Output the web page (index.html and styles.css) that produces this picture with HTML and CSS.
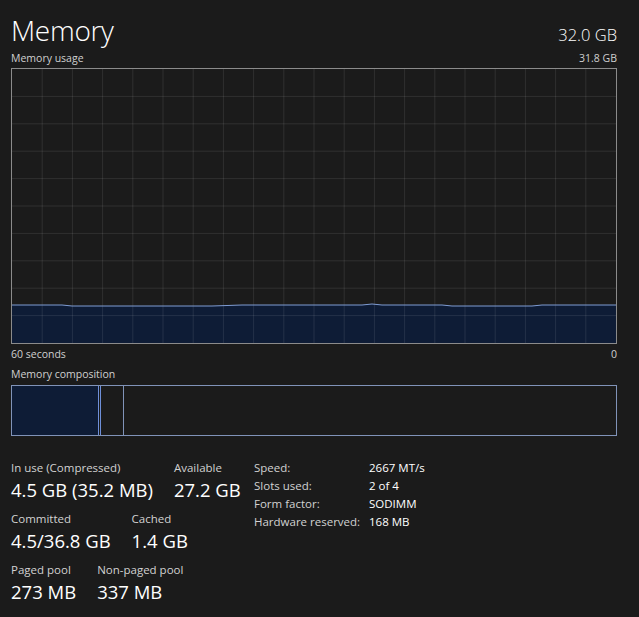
FILE: index.html
```html
<!DOCTYPE html>
<html>
<head>
<meta charset="utf-8">
<link rel="stylesheet" href="styles.css">
</head>
<body>
<div class="page">
  <div class="header">
    <div class="title">Memory</div>
    <div class="total">32.0 GB</div>
  </div>
  <div class="caption-row usage-label">
    <span>Memory usage</span>
    <span>31.8 GB</span>
  </div>
  <div class="graph">
    <svg width="604" height="274" viewBox="0 0 604 274" preserveAspectRatio="none">
      <path class="fill" d="M0 236 L50 236 L60 237 L200 237 L230 236 L350 236 L360 235 L370 236 L430 236 L440 237 L520 237 L530 236 L604 236 L604 274 L0 274 Z"/>
      <g class="grid">
        <line x1="30.2" y1="0" x2="30.2" y2="274"/>
        <line x1="60.4" y1="0" x2="60.4" y2="274"/>
        <line x1="90.6" y1="0" x2="90.6" y2="274"/>
        <line x1="120.8" y1="0" x2="120.8" y2="274"/>
        <line x1="151" y1="0" x2="151" y2="274"/>
        <line x1="181.2" y1="0" x2="181.2" y2="274"/>
        <line x1="211.4" y1="0" x2="211.4" y2="274"/>
        <line x1="241.6" y1="0" x2="241.6" y2="274"/>
        <line x1="271.8" y1="0" x2="271.8" y2="274"/>
        <line x1="302" y1="0" x2="302" y2="274"/>
        <line x1="332.2" y1="0" x2="332.2" y2="274"/>
        <line x1="362.4" y1="0" x2="362.4" y2="274"/>
        <line x1="392.6" y1="0" x2="392.6" y2="274"/>
        <line x1="422.8" y1="0" x2="422.8" y2="274"/>
        <line x1="453" y1="0" x2="453" y2="274"/>
        <line x1="483.2" y1="0" x2="483.2" y2="274"/>
        <line x1="513.4" y1="0" x2="513.4" y2="274"/>
        <line x1="543.6" y1="0" x2="543.6" y2="274"/>
        <line x1="573.8" y1="0" x2="573.8" y2="274"/>
        <line x1="0" y1="27.4" x2="604" y2="27.4"/>
        <line x1="0" y1="54.8" x2="604" y2="54.8"/>
        <line x1="0" y1="82.2" x2="604" y2="82.2"/>
        <line x1="0" y1="109.6" x2="604" y2="109.6"/>
        <line x1="0" y1="137" x2="604" y2="137"/>
        <line x1="0" y1="164.4" x2="604" y2="164.4"/>
        <line x1="0" y1="191.8" x2="604" y2="191.8"/>
        <line x1="0" y1="219.2" x2="604" y2="219.2"/>
        <line x1="0" y1="246.6" x2="604" y2="246.6"/>
      </g>
      <path class="line" d="M0 236 L50 236 L60 237 L200 237 L230 236 L350 236 L360 235 L370 236 L430 236 L440 237 L520 237 L530 236 L604 236"/>
    </svg>
  </div>
  <div class="caption-row axis">
    <span>60 seconds</span>
    <span>0</span>
  </div>
  <div class="caption-row comp-label">
    <span>Memory composition</span>
  </div>
  <div class="composition">
    <div class="seg seg-used"></div>
    <div class="seg seg-mod"></div>
    <div class="seg seg-rest"></div>
  </div>
  <div class="details">
    <div class="stats">
      <div class="stat-row">
        <div class="stat">
          <div class="label">In use (Compressed)</div>
          <div class="value">4.5 GB (35.2 MB)</div>
        </div>
        <div class="stat">
          <div class="label">Available</div>
          <div class="value">27.2 GB</div>
        </div>
      </div>
      <div class="stat-row">
        <div class="stat">
          <div class="label">Committed</div>
          <div class="value">4.5/36.8 GB</div>
        </div>
        <div class="stat">
          <div class="label">Cached</div>
          <div class="value">1.4 GB</div>
        </div>
      </div>
      <div class="stat-row">
        <div class="stat">
          <div class="label">Paged pool</div>
          <div class="value">273 MB</div>
        </div>
        <div class="stat">
          <div class="label">Non-paged pool</div>
          <div class="value">337 MB</div>
        </div>
      </div>
    </div>
    <div class="props">
      <div class="prop-key">Speed:</div><div class="prop-val">2667 MT/s</div>
      <div class="prop-key">Slots used:</div><div class="prop-val">2 of 4</div>
      <div class="prop-key">Form factor:</div><div class="prop-val">SODIMM</div>
      <div class="prop-key">Hardware reserved:</div><div class="prop-val">168 MB</div>
    </div>
  </div>
</div>
</body>
</html>
```

FILE: styles.css
```css
html, body {
  margin: 0;
  padding: 0;
  background: #1b1b1b;
}
body {
  font-family: "Open Sans", "Noto Sans", "Liberation Sans", sans-serif;
  color: #ffffff;
  width: 639px;
  height: 617px;
  overflow: hidden;
}
.page {
  width: 606px;
  padding: 10px 0 0 11px;
}
.header {
  display: flex;
  justify-content: space-between;
  align-items: baseline;
  height: 40px;
}
.title {
  font-size: 28px;
  font-weight: 300;
  line-height: 40px;
  letter-spacing: -0.3px;
}
.total {
  font-size: 16.5px;
  font-weight: 300;
  color: #ffffff;
}
.caption-row {
  display: flex;
  justify-content: space-between;
  font-size: 10.5px;
  color: #d0d0d0;
  line-height: 16px;
  height: 17px;
}
.usage-label {
  height: 18px;
}
.graph {
  width: 604px;
  height: 274px;
  border: 1px solid #8b8b8b;
}
.graph svg {
  display: block;
}
.grid line {
  stroke: rgba(255, 255, 255, 0.095);
  stroke-width: 1;
}
.fill {
  fill: #0e1c36;
}
.line {
  fill: none;
  stroke: #7f9cd3;
  stroke-width: 1;
}
.axis {
  margin-top: 2px;
  height: 20px;
}
.comp-label {
  height: 19px;
}
.composition {
  display: flex;
  width: 604px;
  height: 49px;
  border: 1px solid #8093b8;
}
.seg-used {
  width: 86px;
  background: #0e1c36;
  border-right: 1px solid #6e8fd8;
}
.seg-mod {
  width: 22px;
  margin-left: 1px;
  border-left: 1px solid #6e8fd8;
  border-right: 1px solid #8093b8;
}
.seg-rest {
  flex: 1;
}
.details {
  display: flex;
  margin-top: 24px;
}
.stats {
  width: 243px;
}
.stat-row {
  display: flex;
  gap: 21px;
  height: 51px;
}
.label {
  font-size: 11.5px;
  color: #d2d2d2;
  line-height: 16px;
}
.value {
  font-size: 18.5px;
  font-weight: 400;
  line-height: 28px;
  color: #ffffff;
}
.props {
  display: grid;
  grid-template-columns: 115px auto;
  grid-auto-rows: 18px;
  font-size: 11.5px;
  line-height: 16px;
}
.prop-key {
  color: #d2d2d2;
}
.prop-val {
  color: #ffffff;
}
```
